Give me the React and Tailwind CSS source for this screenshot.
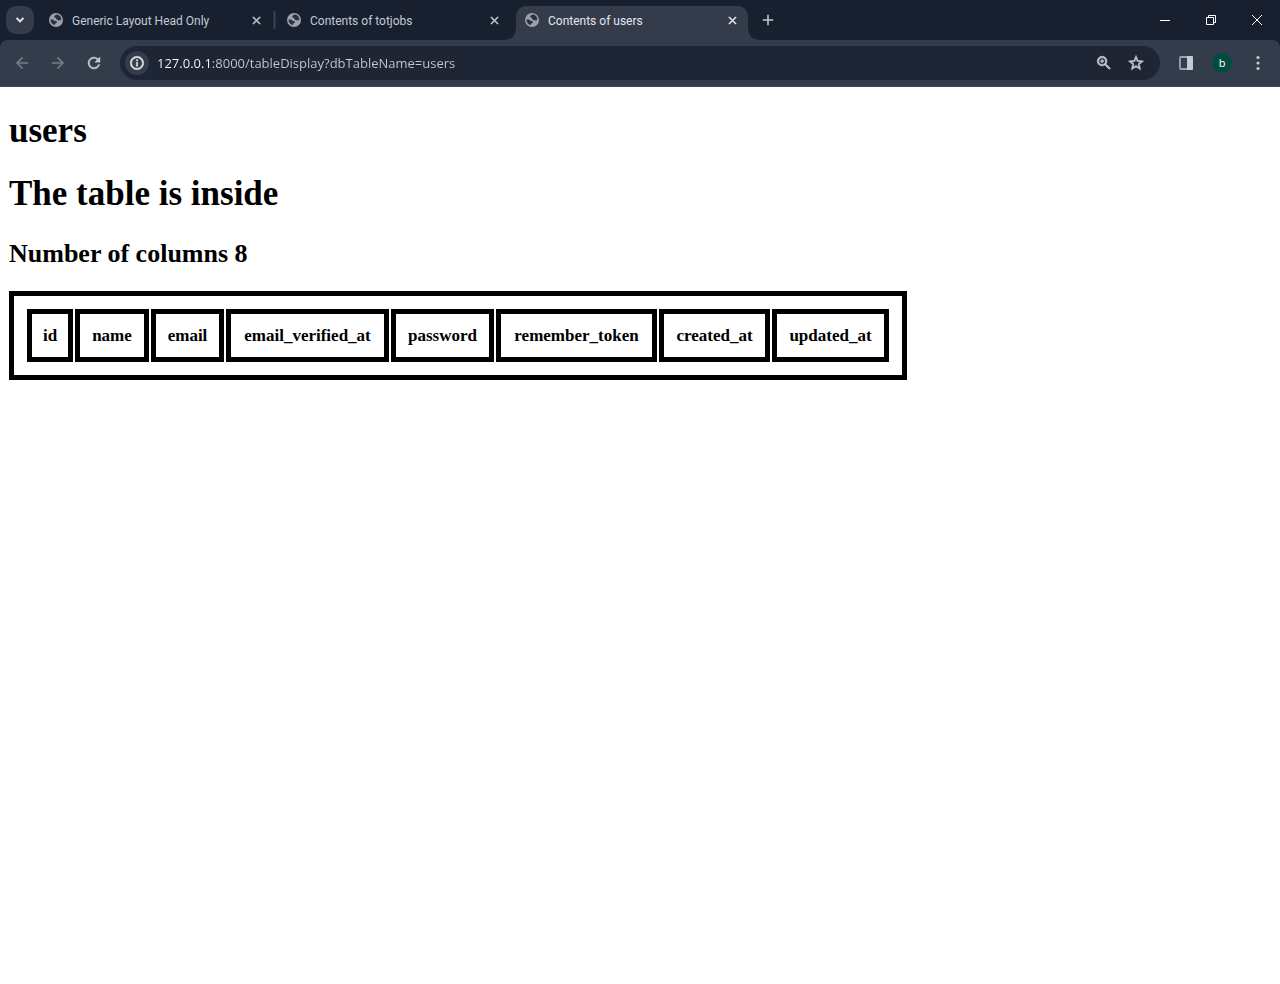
import { MdArrowBack, MdArrowForward, MdInfoOutline, MdRefresh, MdStarBorder, MdZoomIn, MdClose, MdAdd } from "react-icons/md";

const columns = [
  { name: "id", width: "w-[46px]" },
  { name: "name", width: "w-[74px]" },
  { name: "email", width: "w-[73px]" },
  { name: "email_verified_at", width: "w-[163px]" },
  { name: "password", width: "w-[103px]" },
  { name: "remember_token", width: "w-[161px]" },
  { name: "created_at", width: "w-[111px]" },
  { name: "updated_at", width: "w-[117px]" },
];

function GlobeIcon() {
  return (
    <svg className="size-[14px] shrink-0" viewBox="0 0 14 14" aria-hidden="true">
      <circle cx="7" cy="7" r="7" fill="#9da1a8" />
      <path
        d="M8.2 1.6C6.9 1.8 5.4 2.5 5.2 3.6c-.1.9.8 1.2 1.7 1.3.6.1.5.9.3 1.5.8.3 1.7.3 2.3 1 .5-.4 1.5-.3 2.7-.1A5.4 5.4 0 0 0 8.2 1.6zM1.6 6.6c1.4-.2 3 0 3.7.8.7.8 1.7.4 2.4 1 .6.7 0 1.4-.6 1.7-.8.3-.8 1.2-1.5 2A5.5 5.5 0 0 1 1.6 6.6z"
        fill="#273140"
      />
    </svg>
  );
}

function Tab({ title, active }) {
  return (
    <div
      className={
        active
          ? "relative flex h-[34px] w-[232px] items-center rounded-t-[10px] bg-[#343c4c] pb-1.5 pl-[9px] pr-2 text-[#e3e6ec]"
          : "flex h-[34px] w-[232px] items-center pb-1.5 pl-[9px] pr-2 text-[#c2cad8]"
      }
    >
      {active && (
        <>
          <span className="absolute -left-2.5 bottom-0 size-2.5 bg-[radial-gradient(circle_at_0_0,#182030_9px,#343c4c_10px)]" />
          <span className="absolute -right-2.5 bottom-0 size-2.5 bg-[radial-gradient(circle_at_100%_0,#182030_9px,#343c4c_10px)]" />
        </>
      )}
      <GlobeIcon />
      <a href="#" className="ml-[9px] grow truncate pt-px text-[12px] leading-4 font-['Roboto','Open_Sans',sans-serif]">
        {title}
      </a>
      <button type="button" aria-label={"Close " + title} className="flex size-4 items-center justify-center">
        <MdClose className="size-[13px] stroke-1 [&_path[fill=none]]:stroke-none" />
      </button>
    </div>
  );
}

function WindowControls() {
  return (
    <div className="ml-auto flex h-10 text-white">
      <button type="button" aria-label="Minimize" className="flex w-[46px] items-center justify-center">
        <svg className="size-[10px]" viewBox="0 0 10 10" stroke="currentColor">
          <path d="M0 5.5h10" />
        </svg>
      </button>
      <button type="button" aria-label="Restore" className="flex w-[46px] items-center justify-center">
        <svg className="size-[10px]" viewBox="0 0 10 10" fill="none" stroke="currentColor">
          <path d="M.5 2.5h7v7h-7zM2.5 2.5v-2h7v7h-2" />
        </svg>
      </button>
      <button type="button" aria-label="Close window" className="flex w-[46px] items-center justify-center">
        <svg className="size-[10px]" viewBox="0 0 10 10" stroke="currentColor">
          <path d="M0 0l10 10M10 0L0 10" />
        </svg>
      </button>
    </div>
  );
}

function TabStrip() {
  return (
    <div className="flex h-10 items-center bg-[#182030]">
      <button
        type="button"
        aria-label="Search tabs"
        className="ml-1.5 flex size-7 items-center justify-center rounded-[10px] bg-[#343c4c] text-[#e3e6ec]"
      >
        <svg className="h-[6px] w-[8px]" viewBox="0 0 8 6" fill="none" stroke="currentColor" strokeWidth="1.8">
          <path d="M.6 1L4 4.4 7.4 1" />
        </svg>
      </button>
      <nav className="ml-1.5 flex h-10 items-end" aria-label="Open tabs">
        <Tab title="Generic Layout Head Only" />
        <span className="mb-3 ml-0.5 mr-[3px] h-4 w-px bg-[#3a4354] outline outline-[#283142]" />
        <Tab title="Contents of totjobs" />
        <span className="w-1.5" />
        <Tab title="Contents of users" active />
      </nav>
      <button type="button" aria-label="New tab" className="ml-1.5 flex size-7 items-center justify-center text-[#c2cad8]">
        <MdAdd className="size-[18px]" />
      </button>
      <WindowControls />
    </div>
  );
}

function Toolbar() {
  return (
    <div className="bg-[#182030]">
      <div className="flex h-[47px] items-center rounded-t-lg border-b border-[#474b54] bg-[#343c4c] px-2 text-[#c2cad8]">
        <button type="button" aria-label="Back" className="flex size-7 items-center justify-center text-[#727a88]">
          <MdArrowBack className="size-[18px] stroke-[0.5] [&_path[fill=none]]:stroke-none" />
        </button>
        <button type="button" aria-label="Forward" className="ml-2 flex size-7 items-center justify-center text-[#727a88]">
          <MdArrowForward className="size-[18px] stroke-[0.5] [&_path[fill=none]]:stroke-none" />
        </button>
        <button type="button" aria-label="Reload" className="ml-2 flex size-7 items-center justify-center">
          <MdRefresh className="size-[18px] stroke-[0.5] [&_path[fill=none]]:stroke-none" />
        </button>
        <div className="ml-3 flex h-[34px] grow items-center rounded-full bg-[#1e2636] pl-[5px] pr-3.5 text-[#c7c9cd]">
          <button
            type="button"
            aria-label="View site information"
            className="flex size-6 items-center justify-center rounded-full bg-[#343c4c] text-[#e3e3e3]"
          >
            <MdInfoOutline className="size-4 stroke-[0.8] [&_path[fill=none]]:stroke-none" />
          </button>
          <input
            type="text"
            aria-label="Address"
            defaultValue="127.0.0.1:8000/tableDisplay?dbTableName=users"
            className="ml-2 min-w-0 grow bg-[linear-gradient(90deg,#ffffff_55px,#c7c9cd_55px)] bg-clip-text text-[13px] leading-5 text-transparent caret-white outline-none"
          />
          <button type="button" aria-label="Zoom" className="flex size-5 items-center justify-center">
            <MdZoomIn className="size-[18px] stroke-[0.8] [&_path[fill=none]]:stroke-none" />
          </button>
          <button type="button" aria-label="Bookmark this page" className="ml-3 flex size-5 items-center justify-center">
            <MdStarBorder className="size-[18px] stroke-[0.8] [&_path[fill=none]]:stroke-none" />
          </button>
        </div>
        <button type="button" aria-label="Side panel" className="ml-3 flex size-7 items-center justify-center">
          <svg className="size-4" viewBox="0 0 16 16">
            <rect x="2" y="2" width="12" height="12" rx="1" fill="none" stroke="#98a2b5" strokeWidth="1.8" />
            <path d="M9 1h5a1 1 0 0 1 1 1v12a1 1 0 0 1-1 1H9z" fill="currentColor" />
          </svg>
        </button>
        <button type="button" aria-label="Profile" className="ml-2 flex size-7 items-center justify-center">
          <span className="flex size-5 items-center justify-center rounded-full bg-[#004d40] text-[11px] leading-4 text-white">
            b
          </span>
        </button>
        <button type="button" aria-label="Menu" className="ml-2 flex size-7 items-center justify-center">
          <svg className="size-4" viewBox="0 0 16 16" fill="currentColor">
            <circle cx="8" cy="2.5" r="1.6" />
            <circle cx="8" cy="8" r="1.6" />
            <circle cx="8" cy="13.5" r="1.6" />
          </svg>
        </button>
      </div>
    </div>
  );
}

export default function App() {
  return (
    <div className="min-h-screen bg-white">
      <header className="font-['Open_Sans','Noto_Sans',sans-serif]">
        <TabStrip />
        <Toolbar />
      </header>
      <main className="flex flex-col items-start px-[9px] pt-6 font-['Liberation_Serif','Times_New_Roman',serif] font-bold text-black">
        <h1 className="text-[35px] leading-10">users</h1>
        <h1 className="mt-[23px] text-[35px] leading-10">The table is inside</h1>
        <h2 className="mt-6 text-[26px] leading-8">Number of columns 8</h2>
        <table className="mt-[21px] border-separate border-spacing-0.5 border-[5px] border-black p-[11px] text-[17px] leading-[21px]">
          <thead>
            <tr>
              {columns.map((column) => (
                <th key={column.name} scope="col" className={"border-[5px] border-black px-2 py-[11px] " + column.width}>
                  {column.name}
                </th>
              ))}
            </tr>
          </thead>
        </table>
      </main>
    </div>
  );
}
